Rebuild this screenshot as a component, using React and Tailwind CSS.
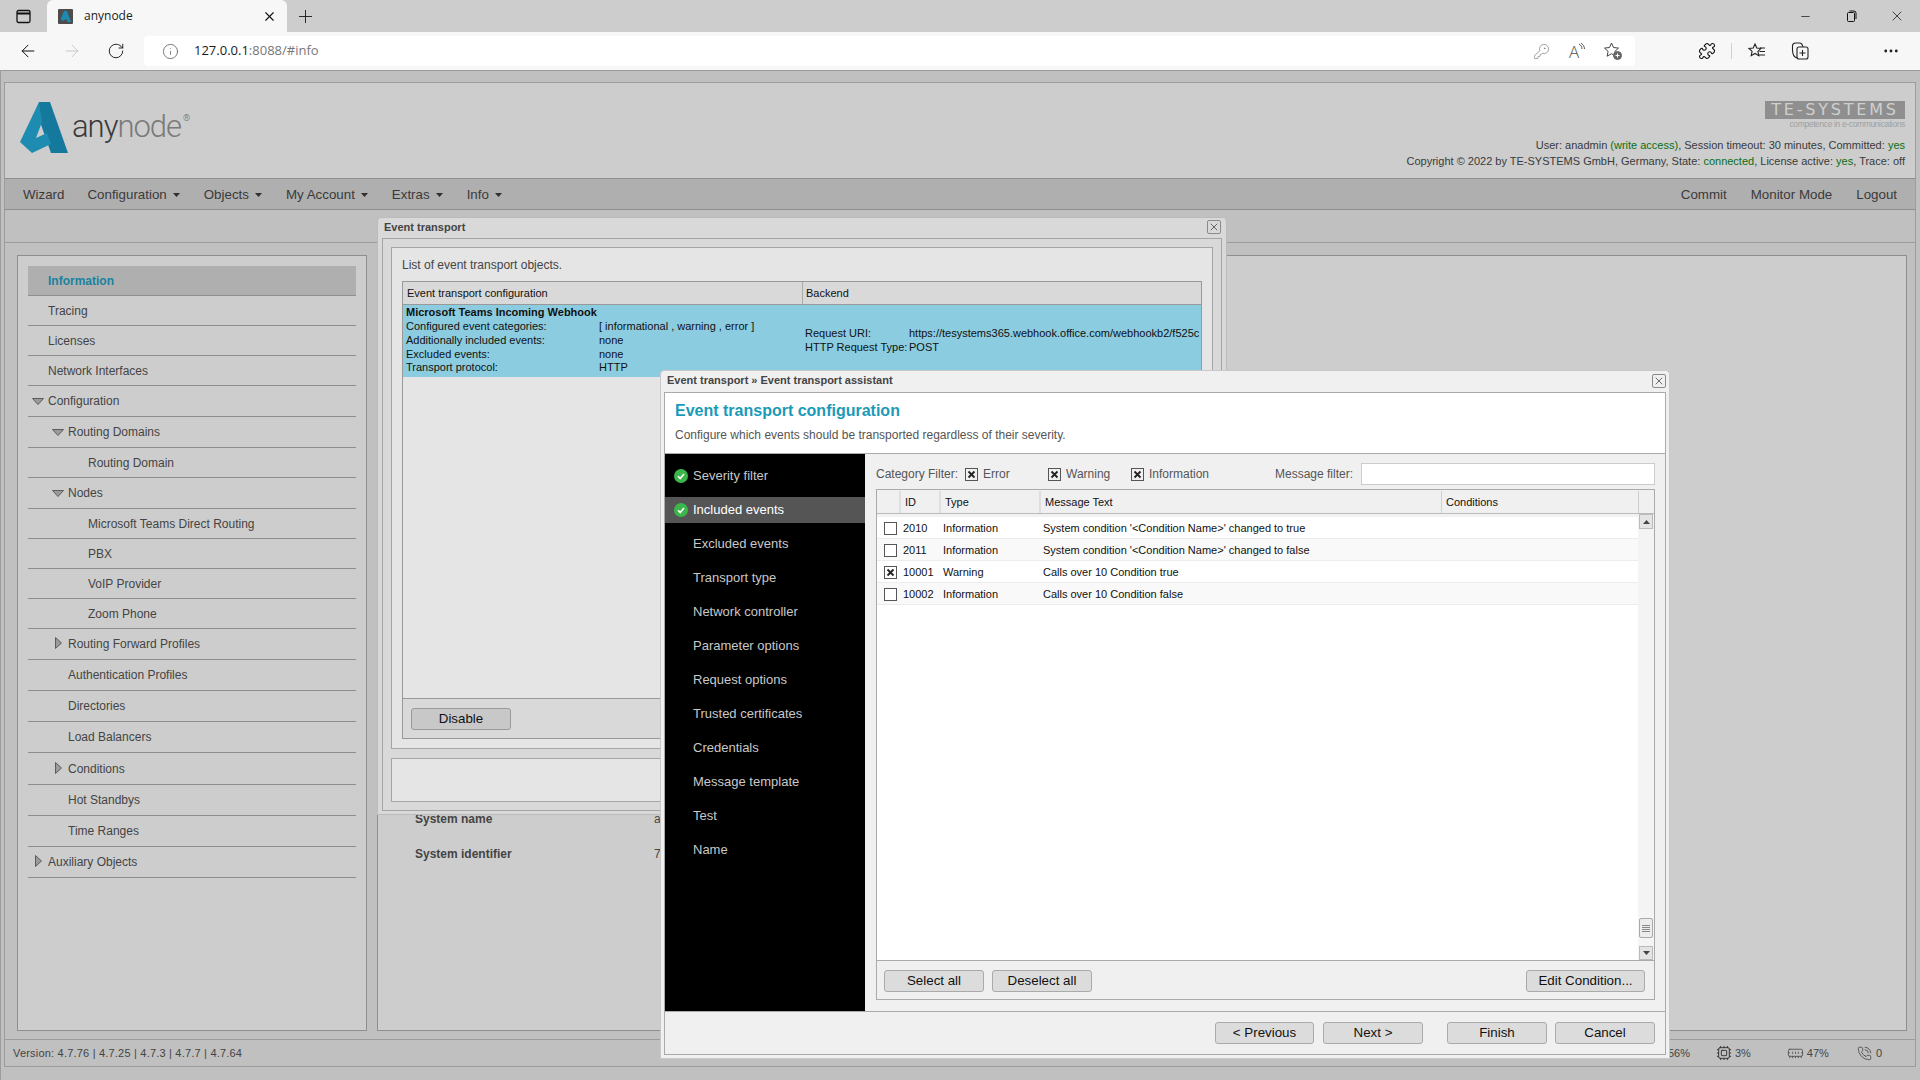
import {
  ArrowLeft,
  ArrowRight,
  RotateCw,
  Info,
  KeyRound,
  Puzzle,
  X,
  Plus,
  Minus,
  MoreHorizontal,
  Cpu,
  MemoryStick,
  PhoneCall,
} from "lucide-react";

const TREE = [
  { label: "Information", cls: "h-[30px] pl-[20px] bg-[#afafaf] font-bold text-[#17839f]" },
  { label: "Tracing", cls: "h-[30px] pl-[20px]" },
  { label: "Licenses", cls: "h-[30px] pl-[20px]" },
  { label: "Network Interfaces", cls: "h-[30px] pl-[20px]" },
  { label: "Configuration", cls: "h-[31px] pl-[20px]", open: true },
  { label: "Routing Domains", cls: "h-[31px] pl-[40px]", open: true },
  { label: "Routing Domain", cls: "h-[30px] pl-[60px]" },
  { label: "Nodes", cls: "h-[31px] pl-[40px]", open: true },
  { label: "Microsoft Teams Direct Routing", cls: "h-[30px] pl-[60px]" },
  { label: "PBX", cls: "h-[30px] pl-[60px]" },
  { label: "VoIP Provider", cls: "h-[30px] pl-[60px]" },
  { label: "Zoom Phone", cls: "h-[30px] pl-[60px]" },
  { label: "Routing Forward Profiles", cls: "h-[31px] pl-[40px]", closed: true },
  { label: "Authentication Profiles", cls: "h-[31px] pl-[40px]" },
  { label: "Directories", cls: "h-[31px] pl-[40px]" },
  { label: "Load Balancers", cls: "h-[31px] pl-[40px]" },
  { label: "Conditions", cls: "h-[32px] pl-[40px]", closed: true },
  { label: "Hot Standbys", cls: "h-[31px] pl-[40px]" },
  { label: "Time Ranges", cls: "h-[31px] pl-[40px]" },
  { label: "Auxiliary Objects", cls: "h-[31px] pl-[20px]", closed: true },
];

const STEPS = [
  { label: "Severity filter", done: true },
  { label: "Included events", done: true, active: true },
  { label: "Excluded events" },
  { label: "Transport type" },
  { label: "Network controller" },
  { label: "Parameter options" },
  { label: "Request options" },
  { label: "Trusted certificates" },
  { label: "Credentials" },
  { label: "Message template" },
  { label: "Test" },
  { label: "Name" },
];

const EVENTS = [
  { id: "2010", type: "Information", text: "System condition '<Condition Name>' changed to true" },
  { id: "2011", type: "Information", text: "System condition '<Condition Name>' changed to false", alt: true },
  { id: "10001", type: "Warning", text: "Calls over 10 Condition true", checked: true },
  { id: "10002", type: "Information", text: "Calls over 10 Condition false", alt: true },
];

function Caret() {
  return (
    <svg width="7" height="4" viewBox="0 0 7 4" className="ml-[6px]">
      <path d="M0 0h7L3.5 4z" fill="#2f2f2f" />
    </svg>
  );
}

function TreeArrow({ open }) {
  if (open) {
    return (
      <svg width="12" height="7" viewBox="0 0 12 7" className="absolute left-[-16px] top-[6px]">
        <path d="M.5.5h11L6 6.5z" fill="#9a9a9a" stroke="#5c5c5c" />
      </svg>
    );
  }
  return (
    <svg width="7" height="12" viewBox="0 0 7 12" className="absolute left-[-13px] top-[2px]">
      <path d="M.5.5v11L6.5 6z" fill="#9a9a9a" stroke="#5c5c5c" />
    </svg>
  );
}

function CheckBox({ checked }) {
  return (
    <span className="w-[13px] h-[13px] shrink-0 flex items-center justify-center border border-[#555] bg-white">
      {checked && (
        <svg width="9" height="9" viewBox="0 0 9 9">
          <path d="M1.5 1.5l6 6M7.5 1.5l-6 6" stroke="#222" strokeWidth="1.8" />
        </svg>
      )}
    </span>
  );
}

function FilterCheck({ label, cls }) {
  return (
    <div className={`flex items-center gap-[5px] ${cls}`}>
      <span className="w-[13px] h-[13px] shrink-0 flex items-center justify-center border border-[#555] bg-[#f0f0f0]">
        <svg width="9" height="9" viewBox="0 0 9 9">
          <path d="M1.5 1.5l6 6M7.5 1.5l-6 6" stroke="#222" strokeWidth="1.8" />
        </svg>
      </span>
      <span>{label}</span>
    </div>
  );
}

function DialogClose({ cls }) {
  return (
    <button className={`w-[14px] h-[14px] flex items-center justify-center border border-[#8a8a8a] rounded-[2px] ${cls}`}>
      <X size={12} strokeWidth={1.3} color="#222" />
    </button>
  );
}

function Btn({ children, cls }) {
  return (
    <button className={`h-[22px] flex items-center justify-center border border-[#aaa] rounded-[3px] bg-[#dcdcdc] text-[13.33px] text-[#111] ${cls}`}>
      {children}
    </button>
  );
}

function BrowserBar() {
  return (
    <>
      <div className="h-[32px] flex bg-[#cdcdcd] font-['Open_Sans',sans-serif]">
        <div className="w-[47px] flex items-center justify-center">
          <svg width="15" height="15" viewBox="0 0 15 15" fill="none" stroke="#111" strokeWidth="1.3">
            <rect x="1" y="1.5" width="13" height="12" rx="1.5" />
            <path d="M1 4.5h13" strokeWidth="2" />
          </svg>
        </div>
        <div className="w-[240px] h-[32px] flex items-center bg-[#f7f7f7] rounded-t-[6px]">
          <svg width="15" height="15" viewBox="0 0 15 15" className="ml-[11px]">
            <rect width="15" height="15" rx="1" fill="#4d4d4d" />
            <path d="M6 2h3l4 11H9.5L8.5 10 5 12 2.5 10z" fill="#1c8ab3" />
          </svg>
          <span className="ml-[11px] text-[12px] text-[#222]">anynode</span>
          <X size={15} strokeWidth={1.8} color="#111" className="ml-auto mr-[10px]" />
        </div>
        <div className="w-[36px] flex items-center justify-center">
          <Plus size={21} strokeWidth={1} color="#111" />
        </div>
        <div className="ml-auto flex">
          <div className="w-[46px] flex items-center justify-center">
            <Minus size={13} strokeWidth={1.3} color="#111" />
          </div>
          <div className="w-[46px] flex items-center justify-center">
            <svg width="11" height="12" viewBox="0 0 11 12" fill="none" stroke="#111">
              <rect x="1.5" y="2.5" width="7" height="9" rx="1" />
              <path d="M3.5 1h4.5a2 2 0 0 1 2 2v6" />
            </svg>
          </div>
          <div className="w-[46px] flex items-center justify-center">
            <X size={16} strokeWidth={1.1} color="#111" />
          </div>
        </div>
      </div>
      <div className="h-[38px] flex items-center pl-[6px] bg-[#f7f7f7] font-['Open_Sans',sans-serif]">
        <div className="w-[44px] flex justify-center">
          <ArrowLeft size={20} strokeWidth={1.2} color="#111" />
        </div>
        <div className="w-[44px] flex justify-center">
          <ArrowRight size={20} strokeWidth={1.1} color="#c4c4c4" />
        </div>
        <div className="w-[44px] flex justify-center">
          <RotateCw size={18} strokeWidth={1.2} color="#111" />
        </div>
        <div className="ml-[6px] w-[1491px] h-[30px] flex items-center rounded-[4px] bg-white">
          <Info size={17} strokeWidth={1.1} color="#555" className="ml-[18px]" />
          <span className="ml-[15px] text-[13px] text-[#777]">
            <span className="text-[#1a1a1a]">127.0.0.1</span>:8088/#info
          </span>
          <div className="ml-auto flex items-center pr-[4px]">
            <div className="w-[36px] flex justify-center">
              <KeyRound size={17} strokeWidth={1} color="#777" />
            </div>
            <div className="w-[36px] flex justify-center items-start text-[17px] font-light text-[#555] leading-none">
              A
              <svg width="7" height="10" viewBox="0 0 7 10" fill="none" stroke="#555" className="-ml-[1px]">
                <path d="M1 1c2 1 3 3 3 5M3 0c2 1.500 3.500 3.500 3.500 6" />
              </svg>
            </div>
            <div className="w-[36px] flex justify-center">
              <svg width="20" height="20" viewBox="0 0 20 20" fill="none" stroke="#444">
                <path d="M8.500 2l2 4.500 5 .6-3.600 3.300 1 4.800-4.400-2.500-4.400 2.500 1-4.800L1.500 7.100l5-.6z" />
                <circle cx="14.500" cy="14.500" r="4" fill="#666" stroke="#666" />
                <path d="M14.500 12.500v4M12.500 14.500h4" stroke="#fff" />
              </svg>
            </div>
          </div>
        </div>
        <div className="ml-[56px] w-[32px] flex justify-center">
          <Puzzle size={18} strokeWidth={1.5} color="#111" />
        </div>
        <div className="ml-[8px] w-[1px] h-[16px] bg-[#d0d0d0]" />
        <div className="ml-[9px] w-[32px] flex justify-center">
          <svg width="20" height="20" viewBox="0 0 20 20" fill="none" stroke="#222" strokeWidth="1.1">
            <path d="M8 3l1.800 4 4.200.5-3.100 2.900.9 4.300L8 12.500l-3.800 2.200.9-4.300L2 7.500l4.200-.5zM13 7h5M12.500 10.500H18M12 14h6" />
          </svg>
        </div>
        <div className="ml-[11px] w-[32px] flex justify-center">
          <svg width="18" height="20" viewBox="0 0 18 20" fill="none" stroke="#222" strokeWidth="1.1">
            <rect x="6" y="6" width="11" height="12" rx="2" />
            <path d="M11.500 9v6M8.500 12h6M6 17C3 16 1.500 13 1.500 9V5a3 3 0 0 1 3-3h4c2 0 3 1.500 3.500 4" />
          </svg>
        </div>
        <div className="ml-[59px] w-[32px] flex justify-center">
          <MoreHorizontal size={18} strokeWidth={1.8} color="#222" />
        </div>
      </div>
    </>
  );
}

function PageHeader() {
  return (
    <div className="h-[96px] flex justify-between border-b border-[#8e8e8e] bg-[#cdcdcd]">
      <div className="flex pl-[10px] pt-[12px]">
        <svg width="55" height="65" viewBox="0 0 55 65">
          <path d="M24 7h11l18 51H36L24 24z" fill="#15799e" />
          <path d="M24 7 5 47l12 11 19-9-4-11-11 5 6-16z" fill="#1e8bb0" />
        </svg>
        <div className="ml-[2px] mt-[12px] h-[40px] flex items-start font-['Roboto',sans-serif] font-light text-[31px] leading-[40px] tracking-[-1px] text-[#3a3a3a]">
          any<span className="text-[#7a7a7a]">node</span>
          <span className="ml-[2px] mt-[-9px] text-[9px] tracking-normal text-[#666]">®</span>
        </div>
      </div>
      <div className="flex flex-col items-end pr-[10px] pt-[18px] text-[11px] text-[#3a3a3a]">
        <div className="w-[140px] h-[18px] flex items-center justify-center bg-[#8f8f8f] text-[16px] font-['DejaVu_Sans',sans-serif] tracking-[2.8px] text-[#cfcfcf]">
          TE-SYSTEMS
        </div>
        <div className="h-[10px] text-[8.5px] leading-[10px] tracking-[-0.37px] text-[#a0a0a0]">
          competence in e-communications
        </div>
        <div className="mt-[8px] h-[16px] leading-[16px]">
          User: anadmin <span className="text-[#0a6e12]">(write access)</span>, Session timeout: 30 minutes, Committed:{" "}
          <span className="text-[#0a6e12]">yes</span>
        </div>
        <div className="h-[16px] leading-[16px]">
          Copyright © 2022 by TE-SYSTEMS GmbH, Germany, State: <span className="text-[#0a6e12]">connected</span>, License
          active: <span className="text-[#0a6e12]">yes</span>, Trace: off
        </div>
      </div>
    </div>
  );
}

function NavBar() {
  return (
    <div className="h-[31px] flex items-center pt-[1px] border-b border-[#8e8e8e] bg-[#afafaf] text-[13.33px] text-[#3a3a3a]">
      <span className="ml-[18px]">Wizard</span>
      <span className="ml-[23px] mt-[1px] flex items-center">Configuration<Caret /></span>
      <span className="ml-[24px] mt-[1px] flex items-center">Objects<Caret /></span>
      <span className="ml-[24px] mt-[1px] flex items-center">My Account<Caret /></span>
      <span className="ml-[24px] mt-[1px] flex items-center">Extras<Caret /></span>
      <span className="ml-[24px] mt-[1px] flex items-center">Info<Caret /></span>
      <span className="ml-auto">Commit</span>
      <span className="ml-[24px]">Monitor Mode</span>
      <span className="ml-[24px] mr-[18px]">Logout</span>
    </div>
  );
}

function SideTree() {
  return (
    <div className="w-[350px] border border-[#8e8e8e] bg-[#cdcdcd] px-[10px] pt-[10px] text-[12px] text-[#444]">
      {TREE.map((item) => (
        <div key={item.label} className={`flex items-center border-b border-[#8e8e8e] ${item.cls}`}>
          <span className="relative">
            {(item.open || item.closed) && <TreeArrow open={item.open} />}
            {item.label}
          </span>
        </div>
      ))}
    </div>
  );
}

function InfoPanel() {
  return (
    <div className="w-[1530px] border border-[#8e8e8e] bg-[#cdcdcd] pl-[37px] pt-[545px] text-[12px] text-[#444]">
      <div className="grid grid-cols-[239px_1fr] auto-rows-[35px] items-center">
        <span className="font-bold">System name</span>
        <span>a</span>
        <span className="font-bold">System identifier</span>
        <span>7</span>
      </div>
    </div>
  );
}

function StatusBar() {
  return (
    <div className="h-[26px] flex items-center bg-[#c0c0c0] pl-[8px] text-[11px] tracking-[0.2px] text-[#444]">
      <span>Version: 4.7.76 | 4.7.25 | 4.7.3 | 4.7.7 | 4.7.64</span>
      <span className="ml-auto flex items-center mr-[33px] tracking-normal">
        <span>56%</span>
        <Cpu size={16} strokeWidth={1.4} color="#333" className="ml-[26px]" />
        <span className="ml-[3px]">3%</span>
        <MemoryStick size={17} strokeWidth={1.1} color="#444" className="ml-[36px]" />
        <span className="ml-[3px]">47%</span>
        <PhoneCall size={15} strokeWidth={1.3} color="#444" className="ml-[28px]" />
        <span className="ml-[4px]">0</span>
      </span>
    </div>
  );
}

function ListDialog() {
  return (
    <div className="absolute left-[377px] top-[217px] w-[850px] h-[598px] flex flex-col px-[4px] border border-[#bbb] rounded-t-[4px] bg-[#d9d9d9] text-[#333]">
      <div className="h-[20px] pb-[2px] flex items-center justify-between text-[11px] font-bold text-[#444] pl-[2px] pr-[1px]">
        <span>Event transport</span>
        <DialogClose />
      </div>
      <div className="h-[573px] flex flex-col gap-[9px] border border-[#a5a5a5] px-[8px] pt-[8px]">
        <div className="h-[502px] flex flex-col border border-[#a5a5a5] bg-[#e5e5e5] px-[10px] pb-[9px]">
          <div className="h-[33px] flex items-center text-[12px] text-[#444]">List of event transport objects.</div>
          <div className="flex-1 flex flex-col border border-[#999] text-[11px]">
            <div className="h-[23px] flex items-center border-b border-[#999] bg-[#d9d9d9] text-[#111]">
              <span className="w-[400px] h-full flex items-center pl-[4px] border-r border-[#aaa]">Event transport configuration</span>
              <span className="pl-[3px]">Backend</span>
            </div>
            <div className="h-[72px] flex bg-[#8bcce0] text-[#111] leading-[14px]">
              <div className="w-[400px] pl-[3px]">
                <div className="font-bold h-[15px]">Microsoft Teams Incoming Webhook</div>
                <div className="grid grid-cols-[193px_1fr] leading-[13.75px]">
                  <span>Configured event categories:</span>
                  <span>[ informational , warning , error ]</span>
                  <span>Additionally included events:</span>
                  <span>none</span>
                  <span>Excluded events:</span>
                  <span>none</span>
                  <span>Transport protocol:</span>
                  <span>HTTP</span>
                </div>
              </div>
              <div className="flex-1 min-w-0 pl-[2px] pt-[21px] pr-[3px]">
                <div className="grid grid-cols-[104px_1fr]">
                  <span>Request URI:</span>
                  <span className="whitespace-nowrap">https://tesystems365.webhook.office.com/webhookb2/f525c</span>
                  <span>HTTP Request Type:</span>
                  <span>POST</span>
                </div>
              </div>
            </div>
            <div className="flex-1" />
            <div className="h-[40px] flex items-center border-t border-[#999] bg-[#d9d9d9] pl-[8px]">
              <button className="w-[100px] h-[22px] border border-[#999] rounded-[3px] bg-[#c8c8c8] text-[13.33px] text-[#111]">Disable</button>
            </div>
          </div>
        </div>
        <div className="h-[44px] border border-[#a5a5a5] bg-[#e5e5e5]" />
      </div>
    </div>
  );
}

function Scrollbar() {
  return (
    <div className="w-[16px] flex flex-col bg-[#f4f4f4] pl-[1px] pr-[1px]">
      <div className="h-[15px] flex items-center justify-center border border-[#bbb] bg-[#e4e4e4]">
        <svg width="7" height="4" viewBox="0 0 7 4"><path d="M0 4h7L3.500 0z" fill="#444" /></svg>
      </div>
      <div className="flex-1" />
      <div className="h-[20px] flex flex-col items-center justify-center gap-[1px] border border-[#aaa] rounded-[2px] bg-[#ececec]">
        <span className="w-[8px] h-[1px] bg-[#888]" />
        <span className="w-[8px] h-[1px] bg-[#888]" />
        <span className="w-[8px] h-[1px] bg-[#888]" />
        <span className="w-[8px] h-[1px] bg-[#888]" />
      </div>
      <div className="mt-[8px] h-[14px] flex items-center justify-center border border-[#bbb] bg-[#e4e4e4]">
        <svg width="7" height="4" viewBox="0 0 7 4"><path d="M0 0h7L3.500 4z" fill="#444" /></svg>
      </div>
    </div>
  );
}

function EventTable() {
  return (
    <div className="mt-[4px] h-[511px] flex flex-col border border-[#aaa] text-[11px] text-[#111]">
      <div className="h-[24px] shrink-0 flex items-stretch pt-[1px] border-b border-[#bbb]">
        <span className="w-[24px] border-r-2 border-[#dedede]" />
        <span className="w-[40px] flex items-center pl-[4px] border-r-2 border-[#dedede]">ID</span>
        <span className="w-[100px] flex items-center pl-[4px] border-r-2 border-[#dedede]">Type</span>
        <span className="w-[401px] flex items-center pl-[4px] border-r border-[#cfcfcf]">Message Text</span>
        <span className="w-[197px] flex items-center pl-[4px] border-r border-[#cfcfcf]">Conditions</span>
      </div>
      <div className="flex-1 min-h-0 flex">
        <div className="flex-1 min-w-0 bg-white border-t-[3px] border-[#f2f2f2]">
          {EVENTS.map((row) => (
            <div key={row.id} className={`h-[22px] flex items-center pt-[2px] border-b border-[#ececec] ${row.alt ? "bg-[#f9f9f9]" : "bg-white"}`}>
              <span className="w-[26px] pl-[7px]"><CheckBox checked={row.checked} /></span>
              <span className="w-[40px]">{row.id}</span>
              <span className="w-[100px]">{row.type}</span>
              <span>{row.text}</span>
            </div>
          ))}
        </div>
        <Scrollbar />
      </div>
      <div className="h-[39px] shrink-0 flex items-center pt-[2px] border-t border-[#aaa] pl-[7px] pr-[9px] gap-[8px]">
        <Btn cls="w-[100px]">Select all</Btn>
        <Btn cls="w-[100px]">Deselect all</Btn>
        <Btn cls="w-[119px] ml-auto">Edit Condition...</Btn>
      </div>
    </div>
  );
}

function AssistantDialog() {
  return (
    <div className="absolute left-[660px] top-[370px] w-[1010px] h-[689px] flex flex-col px-[3px] border border-[#c8c8c8] rounded-t-[4px] bg-[#f0f0f0] text-[#444]">
      <div className="h-[21px] shrink-0 pb-[2px] flex items-center justify-between pl-[3px] text-[11px] font-bold text-[#444]">
        <span>Event transport » Event transport assistant</span>
        <DialogClose />
      </div>
      <div className="h-[663px] flex flex-col border border-[#aaa]">
        <div className="h-[61px] shrink-0 flex flex-col pl-[10px] border-b border-[#aaa] bg-white">
          <div className="mt-[8px] h-[20px] flex items-center text-[16px] font-bold text-[#1a9ab8]">Event transport configuration</div>
          <div className="mt-[6px] h-[16px] flex items-center text-[12px] text-[#555]">Configure which events should be transported regardless of their severity.</div>
        </div>
        <div className="h-[557px] shrink-0 flex">
          <div className="w-[200px] bg-black pt-[5px] text-[13px] text-[#c8c8c8]">
            {STEPS.map((step) => (
              <div key={step.label} className="h-[34px] py-[4px]">
                <div className={`h-[26px] flex items-center ${step.active ? "bg-[#555] text-white" : ""} ${step.done ? "pl-[9px]" : "pl-[28px]"}`}>
                  {step.done && (
                    <svg width="14" height="14" viewBox="0 0 14 14" className="mr-[5px]">
                      <circle cx="7" cy="7" r="7" fill="#3cb54a" />
                      <path d="M4 7.300l2.200 2.200L10 5" fill="none" stroke="#fff" strokeWidth="1.600" />
                    </svg>
                  )}
                  {step.label}
                </div>
              </div>
            ))}
          </div>
          <div className="flex-1 min-w-0 pl-[11px] pr-[10px] pt-[9px] text-[12px] text-[#555]">
            <div className="h-[22px] flex items-center">
              <span className="w-[89px]">Category Filter:</span>
              <FilterCheck label="Error" cls="w-[83px]" />
              <FilterCheck label="Warning" cls="w-[83px]" />
              <FilterCheck label="Information" cls="w-[144px]" />
              <span className="w-[86px]">Message filter:</span>
              <input className="flex-1 min-w-0 h-[22px] border border-[#ccc] bg-white" />
            </div>
            <EventTable />
          </div>
        </div>
        <div className="flex-1 flex items-start justify-end pt-[10px] pr-[10px] border-t border-[#aaa]">
          <Btn cls="w-[99px]">{"< Previous"}</Btn>
          <Btn cls="w-[100px] ml-[9px]">{"Next >"}</Btn>
          <Btn cls="w-[100px] ml-[24px]">Finish</Btn>
          <Btn cls="w-[100px] ml-[8px]">Cancel</Btn>
        </div>
      </div>
    </div>
  );
}

export default function App() {
  return (
    <div className="relative w-[1920px] h-[1080px] overflow-hidden flex flex-col bg-[#c0c0c0] font-['Liberation_Sans',Arial,sans-serif]">
      <BrowserBar />
      <div className="flex-1 min-h-0 pl-[3px] pr-[4px] pt-[11px] border-t border-l border-[#9c9c9c]">
        <div className="w-[1912px] h-[985px] flex flex-col border border-[#9c9c9c]">
          <PageHeader />
          <NavBar />
          <div className="h-[32px] shrink-0 bg-[#c0c0c0]" />
          <div className="h-[798px] shrink-0 flex gap-[10px] pl-[12px] pt-[12px] pb-[8px] border-y border-[#9c9c9c]">
            <SideTree />
            <InfoPanel />
          </div>
          <StatusBar />
        </div>
      </div>
      <ListDialog />
      <AssistantDialog />
    </div>
  );
}
